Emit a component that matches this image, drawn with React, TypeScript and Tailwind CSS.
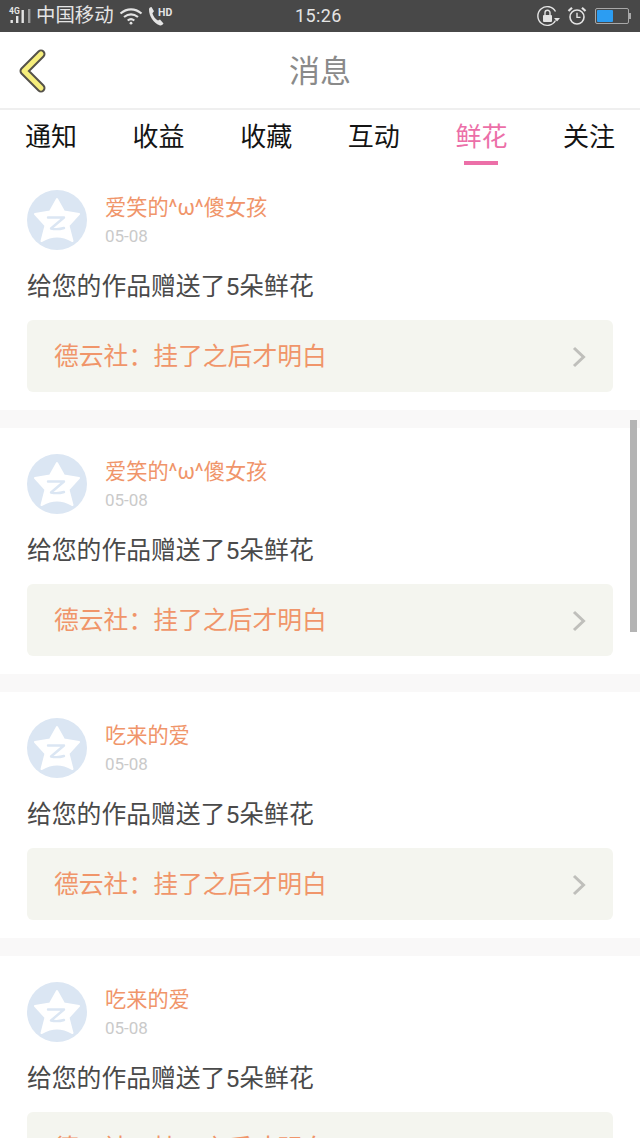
import React from 'react';

const FONT = '[font-family:Roboto,"Noto_Sans_CJK_SC",sans-serif]';

const tabs = ['通知', '收益', '收藏', '互动', '鲜花', '关注'];

const items = [
  { name: '爱笑的^ω^傻女孩' },
  { name: '爱笑的^ω^傻女孩' },
  { name: '吃来的爱' },
  { name: '吃来的爱' },
];

function StatusBar() {
  return (
    <div className="h-8 bg-[#484848] flex items-center text-[#e4e4e4] relative shrink-0">
      {/* signal */}
      <div className="w-[36px] h-8 relative shrink-0">
        <svg width="36" height="32" viewBox="0 0 36 32" className="absolute left-0 top-0">
          <text x="9" y="14" fontSize="8.5" fontWeight="700" fill="#e4e4e4" fontFamily="Roboto, sans-serif">4G</text>
          <rect x="10.5" y="20" width="2.4" height="3" fill="#e4e4e4" />
          <rect x="16" y="16" width="2.4" height="7" fill="#e4e4e4" />
          <rect x="21.5" y="10" width="2.4" height="13" fill="#e4e4e4" />
          <rect x="28" y="9" width="2.4" height="14" fill="#9a9a9a" />
        </svg>
      </div>
      <span className="text-[19.4px] leading-8 w-[84px] shrink-0">中国移动</span>
      {/* wifi */}
      <svg width="24" height="18" viewBox="0 0 24 18" fill="none" stroke="#e4e4e4" strokeWidth="2.2" className="-ml-[1px] shrink-0">
        <path d="M1.5 6.5C8 1 16 1 22.5 6.5" />
        <path d="M5 10C9.5 6.5 14.5 6.5 19 10" />
        <path d="M8.7 13.5C10.6 12 13.4 12 15.3 13.5" />
        <circle cx="12" cy="16.2" r="1.4" fill="#e4e4e4" stroke="none" />
      </svg>
      {/* call hd */}
      <svg width="26" height="22" viewBox="0 0 26 22" className="ml-[5px] shrink-0">
        <path d="M1 4.5C1 3.2 2 2.2 3.5 2L6 6.2L4.4 8.2C5 11 7.5 14 10 15.6L12 14.6L15.5 18.6C14.4 20.2 13 20.8 11.5 20.3C5.5 18.2 1 11 1 4.5Z" fill="#e4e4e4" />
        <text x="10" y="11" fontSize="10.5" fontWeight="700" fill="#e4e4e4" fontFamily="Roboto, sans-serif">HD</text>
      </svg>
      <span className="absolute left-[295px] top-0 text-[18px] leading-8 tracking-[0.4px]">15:26</span>
      <div className="ml-auto flex items-center pr-[9px] gap-[7px]">
        {/* rotation lock */}
        <svg width="23" height="22" viewBox="0 0 23 22" fill="none" className="shrink-0">
          <path d="M18.5 6.5A9.4 9.4 0 1 0 18.5 15.5" stroke="#e4e4e4" strokeWidth="1.4" />
          <path d="M17 13H23L20 16.5Z" fill="#e4e4e4" />
          <rect x="6" y="10" width="9" height="7" rx="1" fill="#e4e4e4" />
          <path d="M8 10V7.8A2.5 2.5 0 0 1 13 7.8V10" stroke="#e4e4e4" strokeWidth="1.4" />
        </svg>
        {/* alarm */}
        <svg width="20" height="20" viewBox="0 0 20 20" fill="none" stroke="#e4e4e4" className="shrink-0">
          <circle cx="10" cy="11" r="7" strokeWidth="1.6" />
          <path d="M10 6.8V11.4H13.5" strokeWidth="1.4" />
          <path d="M1.5 5L5 1.8" strokeWidth="2.2" />
          <path d="M18.5 5L15 1.8" strokeWidth="2.2" />
        </svg>
        {/* battery */}
        <div className="ml-[1px] flex items-center">
          <div className="w-[34px] h-[16px] rounded-[2px] border border-[#a8a8a8] p-[1px] flex">
            <div className="w-[16px] bg-[#2c9df2] rounded-[1px]" />
          </div>
          <div className="w-[2px] h-[6px] bg-[#a8a8a8]" />
        </div>
      </div>
    </div>
  );
}

function Header() {
  return (
    <div className="h-[78px] bg-white border-b-2 border-[#efefef] relative flex items-center justify-center shrink-0">
      <svg width="32" height="46" viewBox="0 0 32 46" fill="none" className="absolute left-[16px] top-[16px]">
        <path d="M25 6L8 23L25 40" stroke="#55524a" strokeWidth="9" strokeLinecap="round" strokeLinejoin="round" />
        <path d="M25 6L8 23L25 40" stroke="#f6ee7c" strokeWidth="5" strokeLinecap="round" strokeLinejoin="round" />
      </svg>
      <span className="text-[31px] leading-none text-[#8a8a8a] mt-[3px]">消息</span>
    </div>
  );
}

function Tabs() {
  return (
    <div className="h-[54px] bg-white flex justify-between px-[25px] shrink-0">
      {tabs.map((t) => {
        const active = t === '鲜花';
        return (
          <div key={t} className="flex flex-col items-center">
            <span className={`text-[26px] leading-[54px] shrink-0 ${active ? 'text-[#ec6fa8]' : 'text-[#141414]'}`}>{t}</span>
            {active && <div className="relative w-[34px] h-[4px] bg-[#ec6fa8] -mt-[3px] shrink-0" />}
          </div>
        );
      })}
    </div>
  );
}

function Avatar() {
  return (
    <svg width="60" height="60" viewBox="0 0 60 60" className="shrink-0">
      <circle cx="30" cy="30" r="30" fill="#dbe6f3" />
      <path
        d="M30 9L37 21.5L52 24L41.5 35.5L45.5 51C40 48 35 46.5 30 46.5C25 46.5 20 48 14.5 51L18.5 35.5L8 24L23 21.5Z"
        fill="#ffffff"
        stroke="#ffffff"
        strokeWidth="2"
        strokeLinejoin="round"
      />
      <path d="M21 27.5H37L24 38.5C28 39.5 32 39.5 37 38" fill="none" stroke="#dbe6f3" strokeWidth="2.4" strokeLinejoin="round" strokeLinecap="round" />
    </svg>
  );
}

function MessageCard({ name }: { name: string }) {
  return (
    <div className="bg-white pt-[26px] pl-[27px] pr-[27px] pb-[18px]">
      <div className="flex">
        <Avatar />
        <div className="ml-[19px] -translate-x-[1px]">
          <div className="text-[21.2px] leading-[30px] text-[#f0956a] mt-[3px]">{name}</div>
          <div className="text-[17px] leading-[24px] text-[#cacaca] mt-[1px]">05-08</div>
        </div>
      </div>
      <div className="text-[24.8px] leading-[36px] text-[#4a4a4a] mt-[19px]">给您的作品赠送了5朵鲜花</div>
      <div className="h-[72px] mt-[15px] bg-[#f4f5ef] rounded-[6px] flex items-center justify-between pl-[27px] pr-[27px]">
        <span className="text-[24.8px] leading-none text-[#f0956a] mt-[3px]">德云社：挂了之后才明白</span>
        <svg width="14" height="22" viewBox="0 0 14 22" fill="none" stroke="#bfbfbb" strokeWidth="3" className="shrink-0 mt-[2px]">
          <path d="M2 2L11.5 11L2 20" />
        </svg>
      </div>
    </div>
  );
}

export default function App() {
  return (
    <div className={`w-[640px] h-[1138px] overflow-hidden bg-white relative flex flex-col ${FONT}`}>
      <StatusBar />
      <Header />
      <Tabs />
      <div className="flex flex-col">
        {items.map((it, i) => (
          <div key={i}>
            <MessageCard name={it.name} />
            <div className="h-[18px] bg-[#f9f8f8]" />
          </div>
        ))}
      </div>
      {/* scrollbar */}
      <div className="absolute left-[630px] top-[420px] w-[7px] h-[212px] bg-[#b4b4b4]" />
    </div>
  );
}
